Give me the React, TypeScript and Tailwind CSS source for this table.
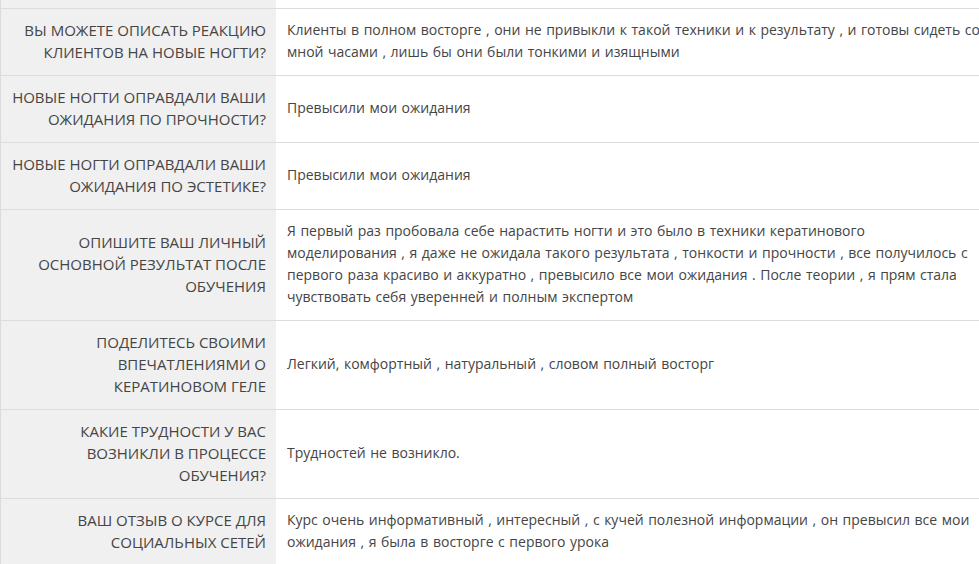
const rows: { q: string[]; a: string[] }[] = [
  {
    q: ["ВЫ МОЖЕТЕ ОПИСАТЬ РЕАКЦИЮ", "КЛИЕНТОВ НА НОВЫЕ НОГТИ?"],
    a: [
      "Клиенты в полном восторге , они не привыкли к такой техники и к результату , и готовы сидеть со",
      "мной часами , лишь бы они были тонкими и изящными",
    ],
  },
  {
    q: ["НОВЫЕ НОГТИ ОПРАВДАЛИ ВАШИ", "ОЖИДАНИЯ ПО ПРОЧНОСТИ?"],
    a: ["Превысили мои ожидания"],
  },
  {
    q: ["НОВЫЕ НОГТИ ОПРАВДАЛИ ВАШИ", "ОЖИДАНИЯ ПО ЭСТЕТИКЕ?"],
    a: ["Превысили мои ожидания"],
  },
  {
    q: ["ОПИШИТЕ ВАШ ЛИЧНЫЙ", "ОСНОВНОЙ РЕЗУЛЬТАТ ПОСЛЕ", "ОБУЧЕНИЯ"],
    a: [
      "Я первый раз пробовала себе нарастить ногти и это было в техники кератинового",
      "моделирования , я даже не ожидала такого результата , тонкости и прочности , все получилось с",
      "первого раза красиво и аккуратно , превысило все мои ожидания . После теории , я прям стала",
      "чувствовать себя уверенней и полным экспертом",
    ],
  },
  {
    q: ["ПОДЕЛИТЕСЬ СВОИМИ", "ВПЕЧАТЛЕНИЯМИ О", "КЕРАТИНОВОМ ГЕЛЕ"],
    a: ["Легкий, комфортный , натуральный , словом полный восторг"],
  },
  {
    q: ["КАКИЕ ТРУДНОСТИ У ВАС", "ВОЗНИКЛИ В ПРОЦЕССЕ", "ОБУЧЕНИЯ?"],
    a: ["Трудностей не возникло."],
  },
  {
    q: ["ВАШ ОТЗЫВ О КУРСЕ ДЛЯ", "СОЦИАЛЬНЫХ СЕТЕЙ"],
    a: [
      "Курс очень информативный , интересный , с кучей полезной информации , он превысил все мои",
      "ожидания , я была в восторге с первого урока",
    ],
  },
];

export default function App() {
  return (
    <div
      className="h-[564px] w-[979px] overflow-hidden bg-white leading-[22px] text-[#454545]"
      style={{ fontFamily: '"Open Sans", sans-serif' }}
    >
      <div className="flex h-[8px] border-l border-[#dcdcdc]">
        <div className="w-[275px] bg-[#f0f0f0]" />
        <div className="flex-1" />
      </div>
      {rows.map((r, i) => (
        <div key={i} className="flex border-t border-l border-[#dcdcdc]">
          <div className="w-[275px] shrink-0 bg-[#f0f0f0] pt-[10px] pb-[12px] px-[10px] text-right text-[15px] flex flex-col justify-center">
            {r.q.map((l, j) => (
              <div key={j} className="whitespace-nowrap">{l}</div>
            ))}
          </div>
          <div className="flex-1 pt-[10px] pb-[12px] pl-[11px] pr-[4px] text-[14px] [word-spacing:0.9px] flex flex-col justify-center">
            {r.a.map((l, j) => (
              <div key={j} className="whitespace-nowrap">{l}</div>
            ))}
          </div>
        </div>
      ))}
    </div>
  );
}
